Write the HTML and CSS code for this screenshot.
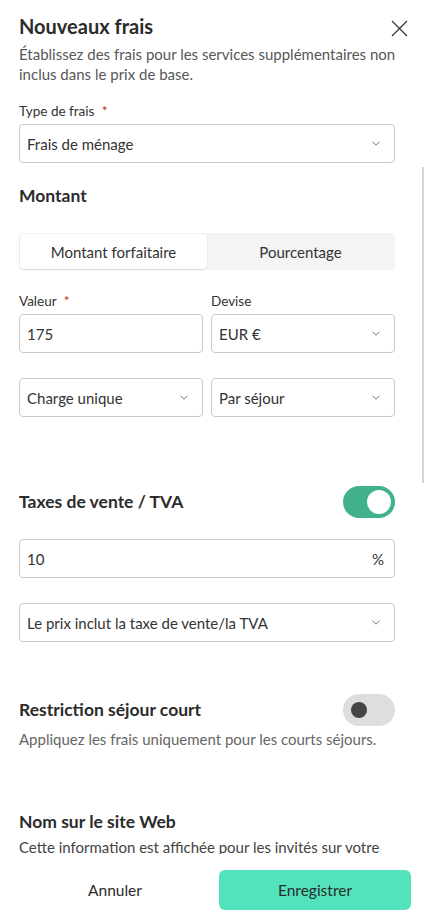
FILE: index.html
```html
<!DOCTYPE html>
<html lang="fr">
<head>
    <meta charset="UTF-8">
    <meta name="viewport" content="width=device-width, initial-scale=1.0">
    <title>Nouveaux frais</title>
    <link rel="stylesheet" href="styles.css">
</head>
<body>
    <!-- 面板 -->
    <div class="panel">
        <div class="content">
            <div class="header">
                <h1 class="title">Nouveaux frais</h1>
                <button class="close" type="button">
                    <svg width="17" height="17" viewBox="0 0 17 17">
                        <path d="M1 1L16 16M16 1L1 16" stroke="#333" stroke-width="1.2" fill="none"/>
                    </svg>
                </button>
            </div>
            <p class="subtitle">Établissez des frais pour les services supplémentaires non inclus dans le prix de base.</p>

            <!-- 类型 -->
            <div class="label label-type">Type de frais <span class="star">*</span></div>
            <div class="field select">
                <span>Frais de ménage</span>
                <svg class="chevron" width="8" height="5" viewBox="0 0 8 5"><path d="M0.5 0.8L4 4.2L7.5 0.8" stroke="#666" stroke-width="0.9" fill="none"/></svg>
            </div>

            <!-- 金额 -->
            <h2 class="section-title montant">Montant</h2>
            <div class="segmented">
                <div class="segment active">Montant forfaitaire</div>
                <div class="segment">Pourcentage</div>
            </div>

            <div class="row row-labels">
                <div class="col">
                    <div class="label">Valeur <span class="star">*</span></div>
                    <div class="field"><span>175</span></div>
                </div>
                <div class="col">
                    <div class="label">Devise</div>
                    <div class="field select">
                        <span>EUR €</span>
                        <svg class="chevron" width="8" height="5" viewBox="0 0 8 5"><path d="M0.5 0.8L4 4.2L7.5 0.8" stroke="#666" stroke-width="0.9" fill="none"/></svg>
                    </div>
                </div>
            </div>

            <div class="row row-second">
                <div class="col">
                    <div class="field select">
                        <span>Charge unique</span>
                        <svg class="chevron" width="8" height="5" viewBox="0 0 8 5"><path d="M0.5 0.8L4 4.2L7.5 0.8" stroke="#666" stroke-width="0.9" fill="none"/></svg>
                    </div>
                </div>
                <div class="col">
                    <div class="field select">
                        <span>Par séjour</span>
                        <svg class="chevron" width="8" height="5" viewBox="0 0 8 5"><path d="M0.5 0.8L4 4.2L7.5 0.8" stroke="#666" stroke-width="0.9" fill="none"/></svg>
                    </div>
                </div>
            </div>

            <!-- 税 -->
            <div class="toggle-row taxes">
                <h2 class="section-title">Taxes de vente / TVA</h2>
                <div class="toggle on"><span class="knob"></span></div>
            </div>
            <div class="field tax-value">
                <span>10</span>
                <span class="unit">%</span>
            </div>
            <div class="field select tax-mode">
                <span>Le prix inclut la taxe de vente/la TVA</span>
                <svg class="chevron" width="8" height="5" viewBox="0 0 8 5"><path d="M0.5 0.8L4 4.2L7.5 0.8" stroke="#666" stroke-width="0.9" fill="none"/></svg>
            </div>

            <!-- 短期限制 -->
            <div class="toggle-row restriction">
                <h2 class="section-title">Restriction séjour court</h2>
                <div class="toggle"><span class="knob"></span></div>
            </div>
            <p class="desc">Appliquez les frais uniquement pour les courts séjours.</p>

            <!-- 网站名称 -->
            <h2 class="section-title website">Nom sur le site Web</h2>
            <p class="desc desc-web">Cette information est affichée pour les invités sur votre site Web et dans les e-mails de réservation.</p>
        </div>

        <!-- 底部按钮 -->
        <div class="footer">
            <button class="btn btn-cancel" type="button">Annuler</button>
            <button class="btn btn-save" type="button">Enregistrer</button>
        </div>

        <!-- 滚动条 -->
        <div class="scrollbar"></div>
    </div>
</body>
</html>
```
FILE: styles.css
```css
*{
    margin: 0;
    padding: 0;
    box-sizing: border-box;
}

body{
    font-family: Lato, "Noto Sans", sans-serif;
    font-size: 15px;
    color: #333;
    background-color: #fff;
}

/* 面板 */
.panel{
    position: relative;
    height: 919px;
    display: flex;
    flex-direction: column;
}

.content{
    flex: 1;
    overflow: hidden;
    padding: 14px 29px 0 19px;
}

/* 标题 */
.header{
    display: flex;
    justify-content: space-between;
    align-items: flex-start;
}
.title{
    font-size: 20px;
    line-height: 24px;
    font-weight: 700;
    color: #2b2b2b;
}
.close{
    border: none;
    background: none;
    margin-top: 6px;
    margin-right: -13px;
    width: 17px;
    height: 17px;
}
.close svg{
    display: block;
}
.subtitle{
    margin-top: 6px;
    margin-right: -13px;
    line-height: 20px;
    color: #575757;
}

/* 标签 */
.label{
    font-size: 13.5px;
    line-height: 18px;
    color: #333;
    margin-bottom: 4px;
}
.label-type{
    margin-top: 18px;
}
.star{
    color: #b8312f;
    margin-left: 4px;
}

/* 输入框 */
.field{
    height: 39px;
    border: 1px solid #c9c9c9;
    border-radius: 4px;
    padding: 0 14px 0 7px;
    display: flex;
    align-items: center;
    justify-content: space-between;
    color: #333;
    white-space: nowrap;
}
.chevron{
    flex: none;
}
.unit{
    margin-right: -4px;
    color: #333;
}

/* 小标题 */
.section-title{
    font-size: 17.5px;
    line-height: 24px;
    font-weight: 700;
    color: #2b2b2b;
}
.montant{
    margin-top: 21px;
}

/* 分段按钮 */
.segmented{
    margin-top: 25px;
    height: 37px;
    background-color: #f4f4f4;
    border-radius: 4px;
    padding: 1px;
    display: flex;
}
.segment{
    flex: 1;
    display: flex;
    align-items: center;
    justify-content: center;
    border-radius: 4px;
    color: #333;
}
.segment.active{
    background-color: #fff;
    box-shadow: 0 1px 2px rgba(0, 0, 0, 0.12);
}

/* 两列 */
.row{
    display: flex;
    gap: 8px;
}
.col{
    flex: 1;
    min-width: 0;
}
.row-labels{
    margin-top: 22px;
}
.row-second{
    margin-top: 25px;
}

/* 开关 */
.toggle-row{
    display: flex;
    justify-content: space-between;
    align-items: center;
}
.taxes{
    margin-top: 69px;
}
.restriction{
    margin-top: 52px;
}
.toggle{
    width: 52px;
    height: 32px;
    border-radius: 16px;
    background-color: #dedede;
    display: flex;
    align-items: center;
    padding-left: 8px;
}
.toggle .knob{
    width: 16px;
    height: 16px;
    border-radius: 50%;
    background-color: #454545;
}
.toggle.on{
    background-color: #42b28e;
    justify-content: flex-end;
    padding: 0 4px;
}
.toggle.on .knob{
    width: 24px;
    height: 24px;
    background-color: #fff;
}

.tax-value{
    margin-top: 21px;
}
.tax-mode{
    margin-top: 25px;
}

/* 说明文字 */
.desc{
    line-height: 20px;
    color: #666;
    margin-top: 3px;
}
.website{
    margin-top: 61px;
}
.desc-web{
    color: #444;
}

/* 底部 */
.footer{
    height: 65px;
    display: flex;
    gap: 8px;
    padding: 16px 13px 9px 19px;
}
.btn{
    flex: 1;
    height: 40px;
    border: none;
    border-radius: 6px;
    font-family: inherit;
    font-size: 15.5px;
    color: #2b2b2b;
    background: none;
}
.btn-save{
    background-color: #52e3bd;
}

/* 滚动条 */
.scrollbar{
    position: absolute;
    right: 0;
    top: 167px;
    width: 2px;
    height: 316px;
    background-color: #d4d4d4;
}
```
